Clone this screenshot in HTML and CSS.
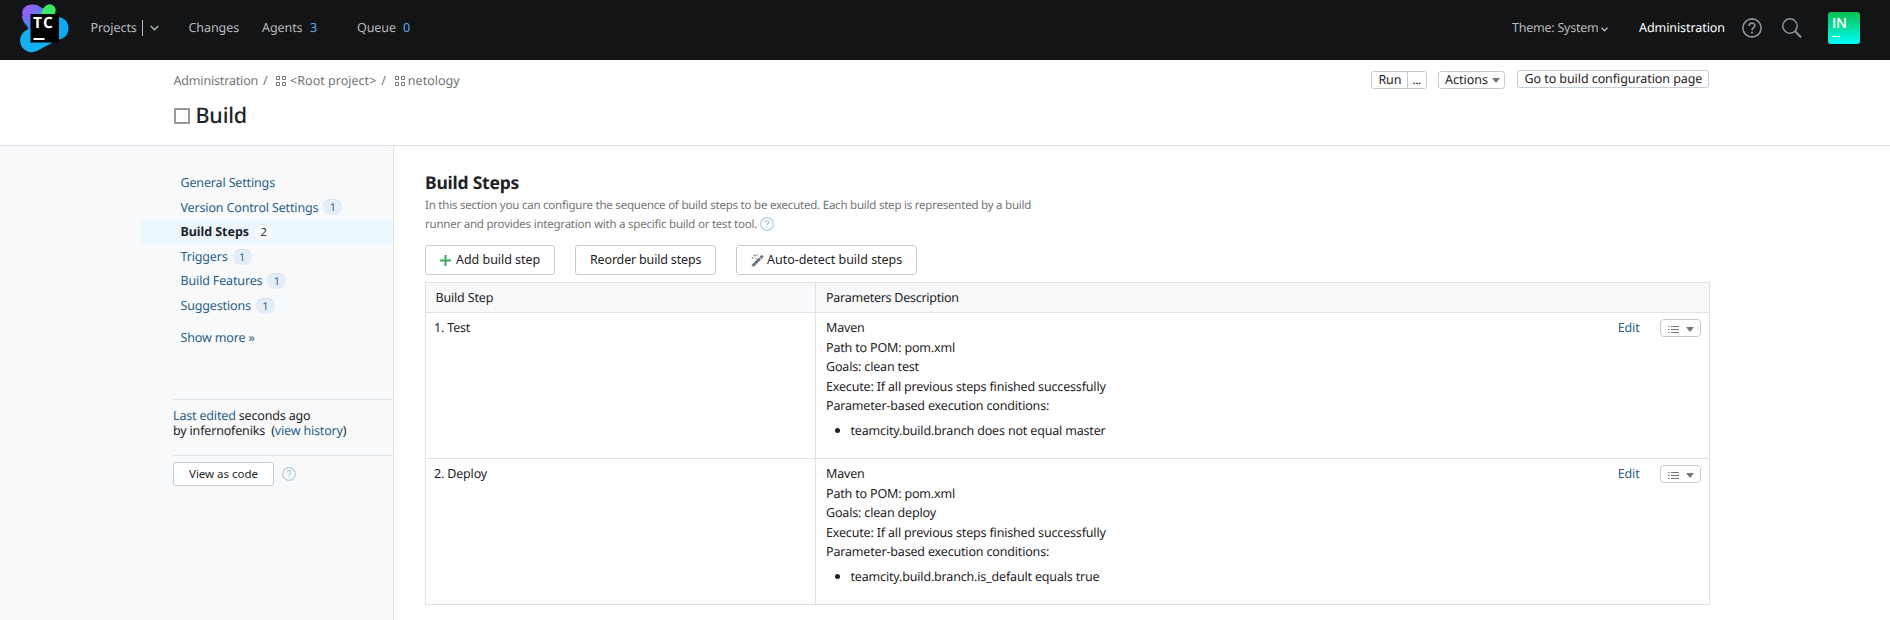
FILE: index.html
```
<!DOCTYPE html>
<html lang="en">
<head>
<meta charset="utf-8">
<title>Build Steps</title>
<link rel="stylesheet" href="styles.css">
</head>
<body>
<svg width="0" height="0" class="defs">
  <symbol id="grid" viewBox="0 0 11 11"><path d="M.5.5h3v3h-3zM6.500.5h3v3h-3zM.5 6.500h3v3h-3zM6.500 6.500h3v3h-3z" fill="none" stroke="currentColor"/></symbol>
  <symbol id="help" viewBox="0 0 20 20"><circle cx="10" cy="10" r="9.100" fill="none" stroke="currentColor" stroke-width="1.600"/><path d="M7 8c0-4 6-3.800 5.800-.3C12.700 9.700 10 9.700 10 12.200" fill="none" stroke="currentColor" stroke-width="1.700"/><circle cx="10" cy="14.700" r="1.100" fill="currentColor"/></symbol>
  <symbol id="list" viewBox="0 0 11 9"><path d="M0 1.500h1.500M3 1.500h8M0 4.500h1.500M3 4.500h8M0 7.500h1.500M3 7.500h8" stroke="currentColor" stroke-width="1.200" fill="none"/></symbol>
</svg>
<header class="topbar">
  <svg class="logo" viewBox="0 0 49 49" width="49" height="49">
    <defs>
      <linearGradient id="violet" gradientUnits="userSpaceOnUse" x1="4" y1="4" x2="22" y2="14"><stop offset="0" stop-color="#9460f5"/><stop offset=".5" stop-color="#8069f3"/><stop offset="1" stop-color="#3f8cf5"/></linearGradient>
      <linearGradient id="left" gradientUnits="userSpaceOnUse" x1="0" y1="12" x2="0" y2="30"><stop offset="0" stop-color="#8168f3"/><stop offset="1" stop-color="#12a8f2"/></linearGradient>
    </defs>
    <path d="M38 13c6 0 10.500 5 10.500 11.500S44 35 38 35.500z" fill="#0ca8f3"/>
    <path d="M20 16L29.700 6.200" stroke="#3bea62" stroke-width="12" stroke-linecap="round"/>
    <path d="M12 .5c5 0 7 1.500 11 4.200L19 14H4C-.5 8 4 .5 12 .5z" fill="url(#violet)"/>
    <path d="M2 12c.5 7 5.500 9 6.500 13L4 30h10V12z" fill="url(#left)"/>
    <path d="M11.800 36.500L24 30" stroke="#12b0ee" stroke-width="23.500" stroke-linecap="round"/>
    <rect x="10.500" y="10" width="28.500" height="28.500" fill="#000"/>
    <rect x="13.500" y="34" width="11" height="2" fill="#fff"/>
    <text x="13" y="24" class="logo-text" textLength="20">TC</text>
  </svg>
  <nav class="menu">
    <a class="projects">Projects</a><span class="divider"></span>
    <svg class="chev" width="9" height="6" viewBox="0 0 9 6"><path d="M.7 1L4.500 4.800 8.300 1" fill="none" stroke="#b4b7ba" stroke-width="1.400"/></svg>
    <a class="changes">Changes</a>
    <a class="agents">Agents</a><b class="count">3</b>
    <a class="queue">Queue</a><b class="count q">0</b>
  </nav>
  <div class="tools">
    <a class="theme">Theme: System</a>
    <svg class="theme-chev" width="7" height="5" viewBox="0 0 7 5"><path d="M.5.8L3.500 3.800 6.500.8" fill="none" stroke="#b4b7ba" stroke-width="1.400"/></svg>
    <a class="admin">Administration</a>
    <svg class="help-lg" width="20" height="20"><use href="#help"/></svg>
    <svg class="search" width="20" height="21" viewBox="0 0 20 21"><circle cx="8" cy="8" r="7.200" fill="none" stroke="#87929b" stroke-width="1.500"/><path d="M13 13l6 6.500" stroke="#87929b" stroke-width="2"/></svg>
    <div class="avatar"><span>IN</span><i></i></div>
  </div>
</header>

<section class="head">
  <div class="head-left">
    <div class="crumbs">
      <a>Administration</a><span class="sl">/</span>
      <svg width="11" height="11"><use href="#grid"/></svg><a class="root">&lt;Root project&gt;</a><span class="sl">/</span>
      <svg class="g2" width="11" height="11"><use href="#grid"/></svg><a class="net">netology</a>
    </div>
    <h1><i class="box"></i>Build</h1>
  </div>
  <div class="actions">
    <div class="btn-s run"><span>Run</span><span class="more">...</span></div>
    <div class="btn-s act">Actions<i class="caret"></i></div>
    <div class="btn-s go">Go to build configuration page</div>
  </div>
</section>

<div class="page">
  <aside class="side">
    <ul class="nav">
      <li><a>General Settings</a></li>
      <li><a>Version Control Settings</a><em>1</em></li>
      <li class="on"><a>Build Steps</a><em>2</em></li>
      <li><a>Triggers</a><em>1</em></li>
      <li><a>Build Features</a><em>1</em></li>
      <li><a>Suggestions</a><em>1</em></li>
      <li class="show"><a>Show more »</a></li>
    </ul>
    <div class="edited"><a>Last edited</a> seconds ago<br>by infernofeniks &nbsp;(<a>view history</a>)</div>
    <div class="code"><button class="view">View as code</button><svg class="help-sm" width="14" height="14"><use href="#help"/></svg></div>
  </aside>
  <main class="main">
    <h2>Build Steps</h2>
    <p class="note">In this section you can configure the sequence of build steps to be executed. Each build step is represented by a build<br>runner and provides integration with a specific build or test tool. <svg class="help-sm" width="14" height="14"><use href="#help"/></svg></p>
    <div class="buttons">
      <button class="btn add"><svg width="11" height="11" viewBox="0 0 11 11"><path d="M5.500 0v11M0 5.500h11" stroke="#3faa59" stroke-width="2"/></svg>Add build step</button>
      <button class="btn reorder">Reorder build steps</button>
      <button class="btn auto"><svg width="13" height="13" viewBox="0 0 13 13"><path d="M1.500 12L9 4.500" stroke="#70767b" stroke-width="3"/><path d="M9.200 4.300l2.500-2.500" stroke="#70767b" stroke-width="3"/><path d="M8.200 3.200l1.800 1.800" stroke="#fff" stroke-width=".7"/><path d="M4 0v3M2.500 1.500h3M1.500 3v2M.5 4h2M6.500 0v1.500M4.500 4.500h1.500" stroke="#8b9094" stroke-width=".8"/></svg>Auto-detect build steps</button>
    </div>
    <div class="table">
      <div class="row th"><div class="c1">Build Step</div><div class="c2">Parameters Description</div></div>
      <div class="row">
        <div class="c1">1. Test</div>
        <div class="c2">Maven<br>Path to POM: pom.xml<br>Goals: clean test<br>Execute: If all previous steps finished successfully<br>Parameter-based execution conditions:
          <ul><li>teamcity.build.branch does not equal master</li></ul></div>
        <div class="c3"><a>Edit</a><span class="drop"><svg width="11" height="9"><use href="#list"/></svg><i class="caret"></i></span></div>
      </div>
      <div class="row">
        <div class="c1">2. Deploy</div>
        <div class="c2">Maven<br>Path to POM: pom.xml<br>Goals: clean deploy<br>Execute: If all previous steps finished successfully<br>Parameter-based execution conditions:
          <ul><li>teamcity.build.branch.is_default equals true</li></ul></div>
        <div class="c3"><a>Edit</a><span class="drop"><svg width="11" height="9"><use href="#list"/></svg><i class="caret"></i></span></div>
      </div>
    </div>
  </main>
</div>
</body>
</html>
```
FILE: styles.css
```
* { box-sizing: border-box; }
body {
  margin: 0;
  width: 1890px;
  height: 620px;
  overflow: hidden;
  background: #fff;
  color: #1f2326;
  font: 12.5px/19.5px "Noto Sans", sans-serif;
  letter-spacing: -0.17px;
  text-rendering: geometricPrecision;
  white-space: nowrap;
}
svg { flex: none; display: block; }
.defs { position: absolute; }
button { font: inherit; letter-spacing: inherit; color: inherit; margin: 0; padding: 0; }
ul { list-style: none; margin: 0; padding: 0; }
a { color: #2a5e87; }

/* Top bar */
.topbar {
  height: 60px;
  background: #121415;
  display: flex;
  align-items: center;
  justify-content: space-between;
  padding: 0 30px 5px 19.500px;
}
.topbar a { color: #b9bbbd; letter-spacing: -0.07px; }
.logo { align-self: flex-start; margin-top: 3.500px; }
.logo-text { font: 700 15.500px "Open Sans", sans-serif; fill: #fff; letter-spacing: 0; }
.menu { display: flex; align-items: center; flex: 1; padding-left: 22px; }
.divider { width: 1px; height: 16px; background: #b9bbbd; margin: 0 7px 0 5px; }
.projects { width: 46px; }
.changes { width: 51px; margin-left: 30px; }
.agents { width: 40px; margin-left: 22.500px; }
.count { font-weight: 400; color: #5fa8f0; margin-left: 8px; width: 7px; }
.queue { width: 38px; margin-left: 40px; }
.tools { display: flex; align-items: center; color: #87929b; }
.topbar .theme { width: 86px; letter-spacing: -0.23px; }
.theme-chev { margin: 3px 0 0 3px; }
.topbar .admin { color: #fff; width: 86px; margin-left: 31px; }
.help-lg { margin-left: 17px; }
.search { margin: 2px 0 0 20px; }
.avatar {
  width: 32px;
  height: 32px;
  margin-left: 26px;
  border-radius: 3px;
  background: linear-gradient(#0abf4d, #00fffb);
  color: #fff;
  padding: 3px 0 0 4px;
  font: 600 14px/18px "Open Sans", sans-serif;
}
.avatar span { display: block; }
.avatar i { display: block; width: 8px; height: 1px; margin-top: 3px; background: #fff; }

/* Page header */
.head {
  height: 86px;
  border-bottom: 1px solid #dfe3e7;
  padding: 11px 181px 0 173.500px;
  display: flex;
  justify-content: space-between;
}
.crumbs { display: flex; align-items: center; height: 20px; color: #737577; }
.crumbs a { color: inherit; }
.crumbs .sl { width: 6px; margin: 0 7px 0 5px; }
.crumbs .root { letter-spacing: 0.020px; margin-left: 3px; }
.crumbs .g2 { margin-left: 1px; }
.crumbs .net { margin-left: 1.500px; letter-spacing: 0.020px; }
h1 {
  margin: 10px 0 0;
  display: flex;
  align-items: center;
  gap: 6px;
  font-size: 21.500px;
  line-height: 30px;
  font-weight: 500;
  letter-spacing: -0.200px;
}
.box { width: 16px; height: 16px; border: 2px solid #999; }
.actions { display: flex; align-items: flex-start; }
.btn-s {
  height: 18px;
  border: 1px solid #c3cdd5;
  border-radius: 3px;
  display: flex;
  align-items: center;
  line-height: 16px;
}
.run { width: 56px; margin-right: 11px; }
.run span { padding-left: 6.500px; width: 35px; }
.run .more { border-left: 1px solid #c3cdd5; width: 19px; padding-left: 4.500px; height: 16px; letter-spacing: -0.600px; }
.act { width: 67px; padding-left: 6px; margin-right: 12px; letter-spacing: 0; }
.go { width: 192px; padding-left: 6.500px; margin-top: -1px; letter-spacing: -0.070px; }
.caret {
  border: 4px solid transparent;
  border-top: 5px solid #737577;
  border-bottom: 0;
  margin-left: 4px;
}

/* Body */
.page { display: flex; height: 474px; }
.side {
  width: 394px;
  background: #f7f9fa;
  border-right: 1px solid #dfe3e7;
  padding-left: 141px;
}
.nav { padding-top: 24.500px; height: 253px; }
.nav li { height: 24.600px; padding-left: 39.500px; display: flex; align-items: center; }
.nav a { letter-spacing: -0.150px; }
.nav .on { background: #ebf6ff; }
.nav .on a { color: #1f2326; font-weight: 700; letter-spacing: -0.050px; }
.nav .show { margin-top: 7px; }
.nav em {
  font-style: normal;
  font-size: 11px;
  line-height: 15px;
  width: 19px;
  height: 16px;
  margin-left: 5px;
  border-radius: 8px;
  background: #e4edf8;
  border-top: 1px solid #cfdff0;
  color: #3b6396;
  text-align: center;
}
.nav .on em { background: #f8fafc; color: #1f2326; border-color: #e6edf3; }
.edited {
  margin-left: 32px;
  height: 56px;
  border-top: 1px solid #dfe3e7;
  padding-top: 8px;
  line-height: 15px;
}
.code {
  margin-left: 32px;
  border-top: 1px solid #dfe3e7;
  padding-top: 6px;
  display: flex;
  align-items: center;
}
.view {
  width: 101px;
  height: 24px;
  background: #fff;
  border: 1px solid #c3cdd5;
  border-radius: 3px;
  font-size: 11.500px;
  letter-spacing: -0.020px;
}
.help-sm { color: #b0cbe0; margin-left: 8px; }

.main { flex: 1; padding: 24.500px 0 0 31px; }
h2 { margin: 0; font-size: 17.500px; line-height: 24px; font-weight: 700; letter-spacing: -0.230px; }
.note { margin: 1px 0 11.500px; font-size: 11.500px; line-height: 19px; letter-spacing: -0.222px; color: #737577; }
.note .help-sm { display: inline-block; vertical-align: -3px; margin-left: 0; }
.buttons { display: flex; }
.btn {
  height: 30px;
  background: #fff;
  border: 1px solid #c3cdd5;
  border-radius: 3px;
  display: flex;
  align-items: center;
}
.add { width: 130px; padding-left: 14px; gap: 5px; letter-spacing: -0.030px; }
.reorder { width: 141px; margin: 0 20px; padding-left: 14px; }
.auto { width: 181px; padding-left: 14px; gap: 3px; letter-spacing: -0.030px; }

.table { width: 1285px; margin-top: 7px; border: 1px solid #dfe3e7; border-bottom: 0; }
.row { display: flex; height: 146px; border-bottom: 1px solid #dfe3e7; }
.c1 { width: 390px; border-right: 1px solid #dfe3e7; padding: 5px 0 0 8px; }
.c2 { flex: 1; padding: 5px 0 0 10px; }
.th { height: 30px; background: #f7f9fa; }
.th .c1 { padding-left: 9.500px; }
.th .c2 { letter-spacing: -0.260px; }
.c2 li { margin-top: 5px; padding-left: 24.500px; display: flex; align-items: center; }
.c2 li::before { content: ""; width: 5px; height: 5px; border-radius: 50%; background: #1f2326; margin: 0 11px 0 -16px; }
.c3 { display: flex; align-items: flex-start; padding: 5px 8px 0 0; }
.drop {
  width: 41px;
  height: 18px;
  margin: 1px 0 0 20.500px;
  border: 1px solid #c3cdd5;
  border-radius: 4px;
  display: flex;
  align-items: center;
  padding: 2px 0 0 7px;
  color: #737577;
}
.drop .caret { margin-left: 7px; }
```
